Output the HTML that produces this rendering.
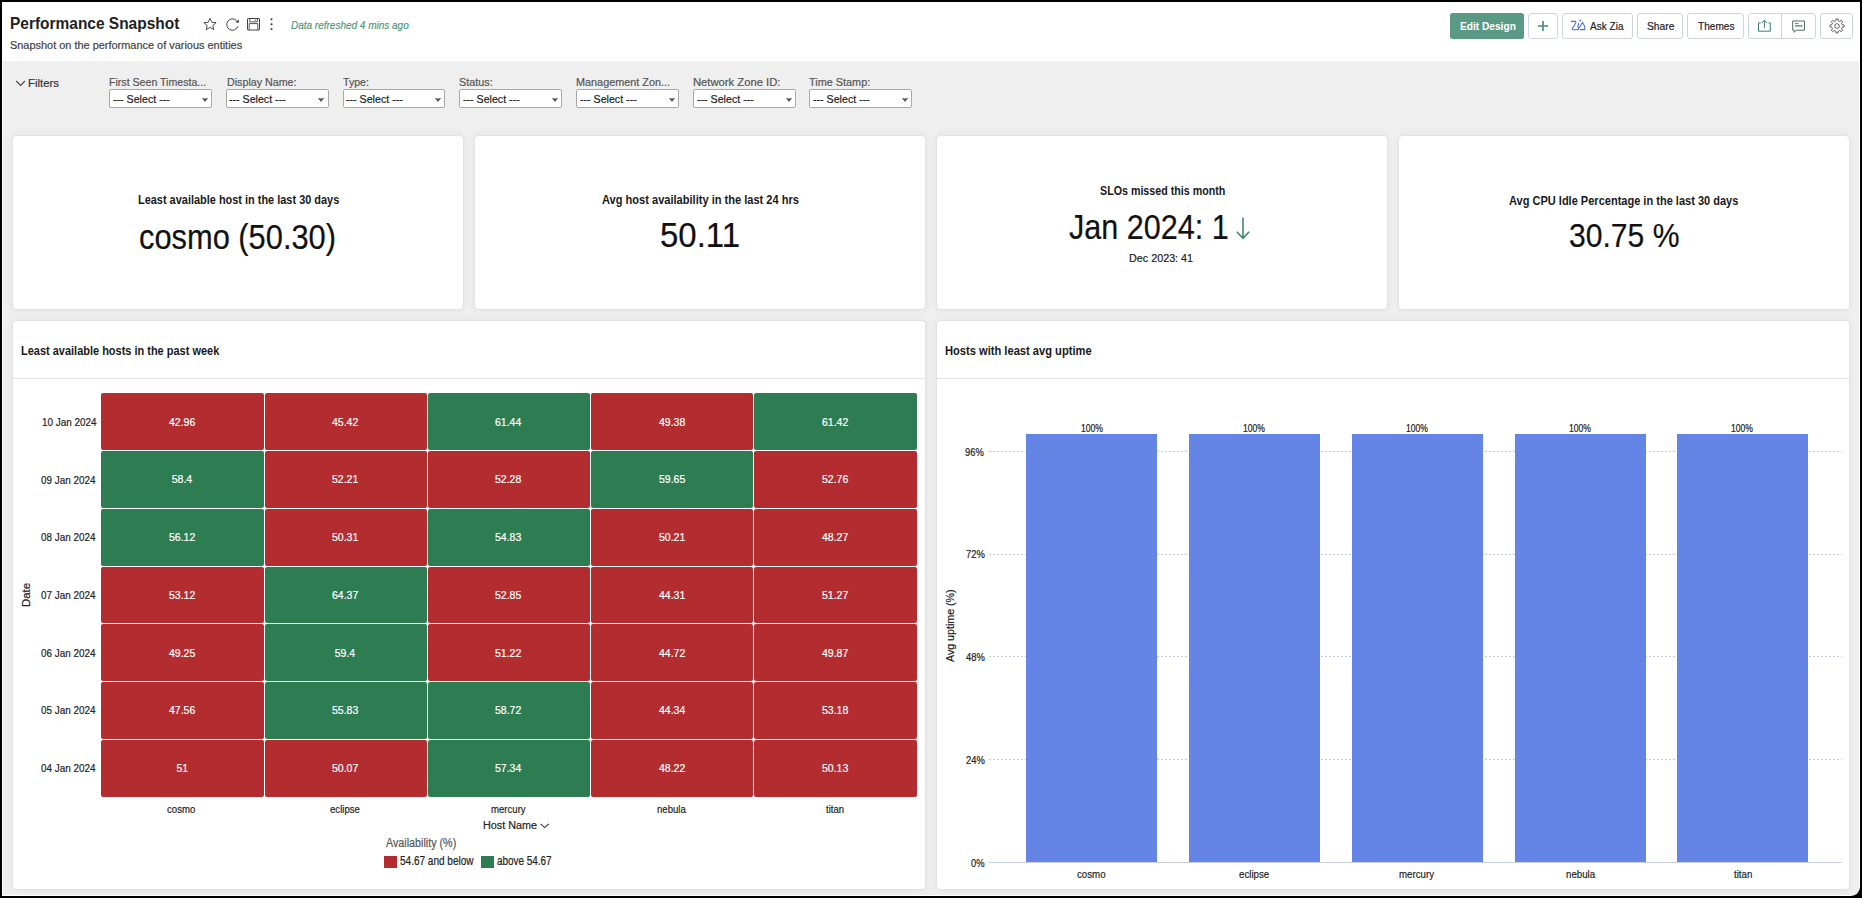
<!DOCTYPE html><html><head><meta charset="utf-8"><style>
*{box-sizing:border-box}
html,body{margin:0;padding:0;width:1862px;height:898px;overflow:hidden;background:#000;font-family:"Liberation Sans",sans-serif}
#app{position:absolute;left:2px;top:2px;width:1858px;height:894px;background:#fff;overflow:hidden;border-bottom-right-radius:9px}
.t{position:absolute;white-space:nowrap;line-height:1;transform-origin:0 0;-webkit-text-stroke:0.2px currentColor}
.t[style*="font-weight:700"]{-webkit-text-stroke:0}
.cv{-webkit-text-stroke:0.2px #fff}
.abs{position:absolute}
.gray{position:absolute;left:1px;top:59px;width:1856px;height:834px;background:#efefef;border-bottom-right-radius:8px}
.card{position:absolute;background:#fff;border-radius:4px;box-shadow:0 0 0 1px #e3e3e3,0 0 7px 2px rgba(0,0,0,0.045)}
.btn{position:absolute;top:13px;height:26px;border:1px solid #cfd5de;border-radius:3px;background:#fff}
.sel{position:absolute;top:89px;height:19px;width:102.5px;background:#fff;border:1px solid #a9a9a9;border-radius:2px}
.cell{position:absolute;border-radius:2px}
.grid{position:absolute;left:989px;width:853px;height:0;border-top:1px dashed #cfcfcf}
.bar{position:absolute;background:#6585e6}
</style></head><body>
<div id="app"><div class="abs" style="left:-2px;top:-2px;width:1862px;height:898px">
<div class="abs" style="left:3px;top:61px;width:1856px;height:834px;background:#efefef;border-bottom-right-radius:8px"></div>
<svg class="abs" style="left:200px;top:14px" width="80" height="20" viewBox="0 0 80 20">
<path d="M10 4.3 L11.8 8.3 L16.1 8.7 L12.8 11.5 L13.8 15.7 L10 13.4 L6.2 15.7 L7.2 11.5 L3.9 8.7 L8.2 8.3 Z" fill="none" stroke="#444" stroke-width="0.95" stroke-linejoin="round"/>
<path d="M36.6 6.6 A5.7 5.7 0 1 0 37.9 12.3" fill="none" stroke="#444" stroke-width="1"/>
<path d="M38.9 5.4 L38.7 9.1 L35.2 8.3 Z" fill="#444"/>
<rect x="47.5" y="4.5" width="12" height="11.5" rx="0.6" fill="none" stroke="#444" stroke-width="1"/>
<path d="M49.8 4.5 V7.9 H57.3 V4.5" fill="none" stroke="#444" stroke-width="0.9"/>
<path d="M55.2 5.6 V6.9" stroke="#444" stroke-width="1"/>
<path d="M49.2 9.6 H57.8 V16 M49.2 9.6 V16" fill="none" stroke="#444" stroke-width="0.9"/>
<circle cx="71.5" cy="5.3" r="1.05" fill="#3a3a3a"/><circle cx="71.5" cy="10.2" r="1.05" fill="#3a3a3a"/><circle cx="71.5" cy="15" r="1.05" fill="#3a3a3a"/>
</svg>
<div class="abs" style="left:1450px;top:13px;width:74px;height:26px;background:#5a9a85;border-radius:2.5px"></div>
<div class="btn" style="left:1528px;width:30px"></div>
<svg class="abs" style="left:1537px;top:20px" width="12" height="12" viewBox="0 0 12 12"><path d="M6 1 V11 M1 6 H11" stroke="#4a8f76" stroke-width="1.7"/></svg>
<div class="btn" style="left:1562px;width:71px"></div>
<svg class="abs" style="left:1568px;top:16px" width="22" height="18" viewBox="0 0 22 18">
<path d="M3.6 5.4 H7.6 Q8.3 6 7.6 7.3 L4.5 12.3 Q3.9 13.7 5.8 13.7 H10 L14.5 6.3 L16.6 10.2 Q16.9 11 16.8 13.6 H12.3" fill="none" stroke="#4b6fd9" stroke-width="1.1" stroke-linejoin="round" stroke-linecap="round"/>
<path d="M10.6 7.5 Q9.3 10 10.3 12.6" fill="none" stroke="#4b6fd9" stroke-width="1.1" stroke-linecap="round"/>
<circle cx="12.2" cy="4.6" r="0.95" fill="#4b6fd9"/>
</svg>
<div class="btn" style="left:1637px;width:46px"></div>
<div class="btn" style="left:1687px;width:57px"></div>
<div class="btn" style="left:1748px;width:68px"></div>
<div class="abs" style="left:1781px;top:13px;width:1px;height:26px;background:#cfd5de"></div>
<div class="btn" style="left:1820px;width:33px"></div>
<svg class="abs" style="left:1756px;top:18px" width="16" height="16" viewBox="0 0 16 16">
<path d="M4.6 4.9 H2.5 V13.2 H14.3 V4.9 H12.4" fill="none" stroke="#3f7d69" stroke-width="1"/>
<path d="M8.4 10.2 V2.4 M5.6 5.1 L8.4 2.2 L11.2 5.1" fill="none" stroke="#3f7d69" stroke-width="1"/>
</svg>
<svg class="abs" style="left:1790px;top:19px" width="17" height="15" viewBox="0 0 17 15">
<path d="M2.7 2 H14.5 V11.2 H6.4 L4.2 13.4 V11.2 H2.7 Z" fill="none" stroke="#4f6d62" stroke-width="1" stroke-linejoin="round"/>
<path d="M5 4.6 H8.6" stroke="#4d8a72" stroke-width="1"/>
<path d="M5 6.9 H12.6" stroke="#8a9a94" stroke-width="1.6"/>
</svg>
<svg class="abs" style="left:1828.5px;top:17.8px" width="16" height="16" viewBox="0 0 16 16"><path d="M6.72 2.86 L7.07 0.96 L8.93 0.96 L9.28 2.86 L10.73 3.46 L12.32 2.37 L13.63 3.68 L12.54 5.27 L13.14 6.72 L15.04 7.07 L15.04 8.93 L13.14 9.28 L12.54 10.73 L13.63 12.32 L12.32 13.63 L10.73 12.54 L9.28 13.14 L8.93 15.04 L7.07 15.04 L6.72 13.14 L5.27 12.54 L3.68 13.63 L2.37 12.32 L3.46 10.73 L2.86 9.28 L0.96 8.93 L0.96 7.07 L2.86 6.72 L3.46 5.27 L2.37 3.68 L3.68 2.37 L5.27 3.46 Z" fill="none" stroke="#555" stroke-width="0.95" stroke-linejoin="round"/><path d="M8.00 5.50 L10.17 6.75 L10.17 9.25 L8.00 10.50 L5.83 9.25 L5.83 6.75 Z" fill="none" stroke="#5f6b68" stroke-width="1" stroke-linejoin="round"/></svg>
<svg class="abs" style="left:15px;top:79px" width="12" height="9" viewBox="0 0 12 9"><path d="M1.3 2.0 L5.6 6.5 L9.9 2.0" fill="none" stroke="#444" stroke-width="1.1"/></svg>
<div class="sel" style="left:109.4px"></div>
<svg class="abs" style="left:200.6px;top:97px" width="8" height="6" viewBox="0 0 8 6"><path d="M0.8 1 Q4 1.8 7.2 1 L4 5 Z" fill="#555"/></svg>
<div class="sel" style="left:226.2px"></div>
<svg class="abs" style="left:317.4px;top:97px" width="8" height="6" viewBox="0 0 8 6"><path d="M0.8 1 Q4 1.8 7.2 1 L4 5 Z" fill="#555"/></svg>
<div class="sel" style="left:342.5px"></div>
<svg class="abs" style="left:433.7px;top:97px" width="8" height="6" viewBox="0 0 8 6"><path d="M0.8 1 Q4 1.8 7.2 1 L4 5 Z" fill="#555"/></svg>
<div class="sel" style="left:459.3px"></div>
<svg class="abs" style="left:550.5px;top:97px" width="8" height="6" viewBox="0 0 8 6"><path d="M0.8 1 Q4 1.8 7.2 1 L4 5 Z" fill="#555"/></svg>
<div class="sel" style="left:576.3px"></div>
<svg class="abs" style="left:667.5px;top:97px" width="8" height="6" viewBox="0 0 8 6"><path d="M0.8 1 Q4 1.8 7.2 1 L4 5 Z" fill="#555"/></svg>
<div class="sel" style="left:693.4px"></div>
<svg class="abs" style="left:784.6px;top:97px" width="8" height="6" viewBox="0 0 8 6"><path d="M0.8 1 Q4 1.8 7.2 1 L4 5 Z" fill="#555"/></svg>
<div class="sel" style="left:809.4px"></div>
<svg class="abs" style="left:900.6px;top:97px" width="8" height="6" viewBox="0 0 8 6"><path d="M0.8 1 Q4 1.8 7.2 1 L4 5 Z" fill="#555"/></svg>
<div class="card" style="left:13px;top:136px;width:450px;height:173px"></div>
<div class="card" style="left:475px;top:136px;width:450px;height:173px"></div>
<div class="card" style="left:937px;top:136px;width:450px;height:173px"></div>
<div class="card" style="left:1399px;top:136px;width:450px;height:173px"></div>
<div class="card" style="left:13px;top:321px;width:912px;height:568px"></div>
<div class="card" style="left:937px;top:321px;width:912px;height:568px"></div>
<div class="abs" style="left:13px;top:378px;width:912px;height:1px;background:#e3e3e3"></div>
<div class="abs" style="left:937px;top:378px;width:912px;height:1px;background:#e3e3e3"></div>
<svg class="abs" style="left:1234px;top:216px" width="18" height="24" viewBox="0 0 18 24"><path d="M9 1.5 V22 M2.8 15.8 L9 22.4 L15.2 15.8" fill="none" stroke="#3d8a68" stroke-width="1.6"/></svg>
<div class="cell" style="left:101.00px;top:393.00px;width:162.70px;height:57.21px;background:#b22c30"></div>
<div class="abs" style="left:101.00px;top:393.00px;width:162.20px;height:56.71px;display:flex;align-items:center;justify-content:center"><span class="cv" style="font-size:11.30px;color:#fff;font-weight:400;line-height:1;display:inline-block;transform:translateY(0.60px) scaleX(0.9300)">42.96</span></div>
<div class="cell" style="left:264.70px;top:393.00px;width:162.20px;height:57.21px;background:#b22c30"></div>
<div class="abs" style="left:264.20px;top:393.00px;width:162.20px;height:56.71px;display:flex;align-items:center;justify-content:center"><span class="cv" style="font-size:11.30px;color:#fff;font-weight:400;line-height:1;display:inline-block;transform:translateY(0.60px) scaleX(0.9300)">45.42</span></div>
<div class="cell" style="left:427.90px;top:393.00px;width:162.20px;height:57.21px;background:#2e7d52"></div>
<div class="abs" style="left:427.40px;top:393.00px;width:162.20px;height:56.71px;display:flex;align-items:center;justify-content:center"><span class="cv" style="font-size:11.30px;color:#fff;font-weight:400;line-height:1;display:inline-block;transform:translateY(0.60px) scaleX(0.9300)">61.44</span></div>
<div class="cell" style="left:591.10px;top:393.00px;width:162.20px;height:57.21px;background:#b22c30"></div>
<div class="abs" style="left:590.60px;top:393.00px;width:162.20px;height:56.71px;display:flex;align-items:center;justify-content:center"><span class="cv" style="font-size:11.30px;color:#fff;font-weight:400;line-height:1;display:inline-block;transform:translateY(0.60px) scaleX(0.9300)">49.38</span></div>
<div class="cell" style="left:754.30px;top:393.00px;width:162.70px;height:57.21px;background:#2e7d52"></div>
<div class="abs" style="left:753.80px;top:393.00px;width:162.20px;height:56.71px;display:flex;align-items:center;justify-content:center"><span class="cv" style="font-size:11.30px;color:#fff;font-weight:400;line-height:1;display:inline-block;transform:translateY(0.60px) scaleX(0.9300)">61.42</span></div>
<div class="cell" style="left:101.00px;top:451.21px;width:162.70px;height:56.71px;background:#2e7d52"></div>
<div class="abs" style="left:101.00px;top:450.71px;width:162.20px;height:56.71px;display:flex;align-items:center;justify-content:center"><span class="cv" style="font-size:11.30px;color:#fff;font-weight:400;line-height:1;display:inline-block;transform:translateY(0.60px) scaleX(0.9300)">58.4</span></div>
<div class="cell" style="left:264.70px;top:451.21px;width:162.20px;height:56.71px;background:#b22c30"></div>
<div class="abs" style="left:264.20px;top:450.71px;width:162.20px;height:56.71px;display:flex;align-items:center;justify-content:center"><span class="cv" style="font-size:11.30px;color:#fff;font-weight:400;line-height:1;display:inline-block;transform:translateY(0.60px) scaleX(0.9300)">52.21</span></div>
<div class="cell" style="left:427.90px;top:451.21px;width:162.20px;height:56.71px;background:#b22c30"></div>
<div class="abs" style="left:427.40px;top:450.71px;width:162.20px;height:56.71px;display:flex;align-items:center;justify-content:center"><span class="cv" style="font-size:11.30px;color:#fff;font-weight:400;line-height:1;display:inline-block;transform:translateY(0.60px) scaleX(0.9300)">52.28</span></div>
<div class="cell" style="left:591.10px;top:451.21px;width:162.20px;height:56.71px;background:#2e7d52"></div>
<div class="abs" style="left:590.60px;top:450.71px;width:162.20px;height:56.71px;display:flex;align-items:center;justify-content:center"><span class="cv" style="font-size:11.30px;color:#fff;font-weight:400;line-height:1;display:inline-block;transform:translateY(0.60px) scaleX(0.9300)">59.65</span></div>
<div class="cell" style="left:754.30px;top:451.21px;width:162.70px;height:56.71px;background:#b22c30"></div>
<div class="abs" style="left:753.80px;top:450.71px;width:162.20px;height:56.71px;display:flex;align-items:center;justify-content:center"><span class="cv" style="font-size:11.30px;color:#fff;font-weight:400;line-height:1;display:inline-block;transform:translateY(0.60px) scaleX(0.9300)">52.76</span></div>
<div class="cell" style="left:101.00px;top:508.93px;width:162.70px;height:56.71px;background:#2e7d52"></div>
<div class="abs" style="left:101.00px;top:508.43px;width:162.20px;height:56.71px;display:flex;align-items:center;justify-content:center"><span class="cv" style="font-size:11.30px;color:#fff;font-weight:400;line-height:1;display:inline-block;transform:translateY(0.60px) scaleX(0.9300)">56.12</span></div>
<div class="cell" style="left:264.70px;top:508.93px;width:162.20px;height:56.71px;background:#b22c30"></div>
<div class="abs" style="left:264.20px;top:508.43px;width:162.20px;height:56.71px;display:flex;align-items:center;justify-content:center"><span class="cv" style="font-size:11.30px;color:#fff;font-weight:400;line-height:1;display:inline-block;transform:translateY(0.60px) scaleX(0.9300)">50.31</span></div>
<div class="cell" style="left:427.90px;top:508.93px;width:162.20px;height:56.71px;background:#2e7d52"></div>
<div class="abs" style="left:427.40px;top:508.43px;width:162.20px;height:56.71px;display:flex;align-items:center;justify-content:center"><span class="cv" style="font-size:11.30px;color:#fff;font-weight:400;line-height:1;display:inline-block;transform:translateY(0.60px) scaleX(0.9300)">54.83</span></div>
<div class="cell" style="left:591.10px;top:508.93px;width:162.20px;height:56.71px;background:#b22c30"></div>
<div class="abs" style="left:590.60px;top:508.43px;width:162.20px;height:56.71px;display:flex;align-items:center;justify-content:center"><span class="cv" style="font-size:11.30px;color:#fff;font-weight:400;line-height:1;display:inline-block;transform:translateY(0.60px) scaleX(0.9300)">50.21</span></div>
<div class="cell" style="left:754.30px;top:508.93px;width:162.70px;height:56.71px;background:#b22c30"></div>
<div class="abs" style="left:753.80px;top:508.43px;width:162.20px;height:56.71px;display:flex;align-items:center;justify-content:center"><span class="cv" style="font-size:11.30px;color:#fff;font-weight:400;line-height:1;display:inline-block;transform:translateY(0.60px) scaleX(0.9300)">48.27</span></div>
<div class="cell" style="left:101.00px;top:566.64px;width:162.70px;height:56.71px;background:#b22c30"></div>
<div class="abs" style="left:101.00px;top:566.14px;width:162.20px;height:56.71px;display:flex;align-items:center;justify-content:center"><span class="cv" style="font-size:11.30px;color:#fff;font-weight:400;line-height:1;display:inline-block;transform:translateY(0.60px) scaleX(0.9300)">53.12</span></div>
<div class="cell" style="left:264.70px;top:566.64px;width:162.20px;height:56.71px;background:#2e7d52"></div>
<div class="abs" style="left:264.20px;top:566.14px;width:162.20px;height:56.71px;display:flex;align-items:center;justify-content:center"><span class="cv" style="font-size:11.30px;color:#fff;font-weight:400;line-height:1;display:inline-block;transform:translateY(0.60px) scaleX(0.9300)">64.37</span></div>
<div class="cell" style="left:427.90px;top:566.64px;width:162.20px;height:56.71px;background:#b22c30"></div>
<div class="abs" style="left:427.40px;top:566.14px;width:162.20px;height:56.71px;display:flex;align-items:center;justify-content:center"><span class="cv" style="font-size:11.30px;color:#fff;font-weight:400;line-height:1;display:inline-block;transform:translateY(0.60px) scaleX(0.9300)">52.85</span></div>
<div class="cell" style="left:591.10px;top:566.64px;width:162.20px;height:56.71px;background:#b22c30"></div>
<div class="abs" style="left:590.60px;top:566.14px;width:162.20px;height:56.71px;display:flex;align-items:center;justify-content:center"><span class="cv" style="font-size:11.30px;color:#fff;font-weight:400;line-height:1;display:inline-block;transform:translateY(0.60px) scaleX(0.9300)">44.31</span></div>
<div class="cell" style="left:754.30px;top:566.64px;width:162.70px;height:56.71px;background:#b22c30"></div>
<div class="abs" style="left:753.80px;top:566.14px;width:162.20px;height:56.71px;display:flex;align-items:center;justify-content:center"><span class="cv" style="font-size:11.30px;color:#fff;font-weight:400;line-height:1;display:inline-block;transform:translateY(0.60px) scaleX(0.9300)">51.27</span></div>
<div class="cell" style="left:101.00px;top:624.36px;width:162.70px;height:56.71px;background:#b22c30"></div>
<div class="abs" style="left:101.00px;top:623.86px;width:162.20px;height:56.71px;display:flex;align-items:center;justify-content:center"><span class="cv" style="font-size:11.30px;color:#fff;font-weight:400;line-height:1;display:inline-block;transform:translateY(0.60px) scaleX(0.9300)">49.25</span></div>
<div class="cell" style="left:264.70px;top:624.36px;width:162.20px;height:56.71px;background:#2e7d52"></div>
<div class="abs" style="left:264.20px;top:623.86px;width:162.20px;height:56.71px;display:flex;align-items:center;justify-content:center"><span class="cv" style="font-size:11.30px;color:#fff;font-weight:400;line-height:1;display:inline-block;transform:translateY(0.60px) scaleX(0.9300)">59.4</span></div>
<div class="cell" style="left:427.90px;top:624.36px;width:162.20px;height:56.71px;background:#b22c30"></div>
<div class="abs" style="left:427.40px;top:623.86px;width:162.20px;height:56.71px;display:flex;align-items:center;justify-content:center"><span class="cv" style="font-size:11.30px;color:#fff;font-weight:400;line-height:1;display:inline-block;transform:translateY(0.60px) scaleX(0.9300)">51.22</span></div>
<div class="cell" style="left:591.10px;top:624.36px;width:162.20px;height:56.71px;background:#b22c30"></div>
<div class="abs" style="left:590.60px;top:623.86px;width:162.20px;height:56.71px;display:flex;align-items:center;justify-content:center"><span class="cv" style="font-size:11.30px;color:#fff;font-weight:400;line-height:1;display:inline-block;transform:translateY(0.60px) scaleX(0.9300)">44.72</span></div>
<div class="cell" style="left:754.30px;top:624.36px;width:162.70px;height:56.71px;background:#b22c30"></div>
<div class="abs" style="left:753.80px;top:623.86px;width:162.20px;height:56.71px;display:flex;align-items:center;justify-content:center"><span class="cv" style="font-size:11.30px;color:#fff;font-weight:400;line-height:1;display:inline-block;transform:translateY(0.60px) scaleX(0.9300)">49.87</span></div>
<div class="cell" style="left:101.00px;top:682.07px;width:162.70px;height:56.71px;background:#b22c30"></div>
<div class="abs" style="left:101.00px;top:681.57px;width:162.20px;height:56.71px;display:flex;align-items:center;justify-content:center"><span class="cv" style="font-size:11.30px;color:#fff;font-weight:400;line-height:1;display:inline-block;transform:translateY(0.60px) scaleX(0.9300)">47.56</span></div>
<div class="cell" style="left:264.70px;top:682.07px;width:162.20px;height:56.71px;background:#2e7d52"></div>
<div class="abs" style="left:264.20px;top:681.57px;width:162.20px;height:56.71px;display:flex;align-items:center;justify-content:center"><span class="cv" style="font-size:11.30px;color:#fff;font-weight:400;line-height:1;display:inline-block;transform:translateY(0.60px) scaleX(0.9300)">55.83</span></div>
<div class="cell" style="left:427.90px;top:682.07px;width:162.20px;height:56.71px;background:#2e7d52"></div>
<div class="abs" style="left:427.40px;top:681.57px;width:162.20px;height:56.71px;display:flex;align-items:center;justify-content:center"><span class="cv" style="font-size:11.30px;color:#fff;font-weight:400;line-height:1;display:inline-block;transform:translateY(0.60px) scaleX(0.9300)">58.72</span></div>
<div class="cell" style="left:591.10px;top:682.07px;width:162.20px;height:56.71px;background:#b22c30"></div>
<div class="abs" style="left:590.60px;top:681.57px;width:162.20px;height:56.71px;display:flex;align-items:center;justify-content:center"><span class="cv" style="font-size:11.30px;color:#fff;font-weight:400;line-height:1;display:inline-block;transform:translateY(0.60px) scaleX(0.9300)">44.34</span></div>
<div class="cell" style="left:754.30px;top:682.07px;width:162.70px;height:56.71px;background:#b22c30"></div>
<div class="abs" style="left:753.80px;top:681.57px;width:162.20px;height:56.71px;display:flex;align-items:center;justify-content:center"><span class="cv" style="font-size:11.30px;color:#fff;font-weight:400;line-height:1;display:inline-block;transform:translateY(0.60px) scaleX(0.9300)">53.18</span></div>
<div class="cell" style="left:101.00px;top:739.79px;width:162.70px;height:57.21px;background:#b22c30"></div>
<div class="abs" style="left:101.00px;top:739.29px;width:162.20px;height:56.71px;display:flex;align-items:center;justify-content:center"><span class="cv" style="font-size:11.30px;color:#fff;font-weight:400;line-height:1;display:inline-block;transform:translateY(0.60px) scaleX(0.9300)">51</span></div>
<div class="cell" style="left:264.70px;top:739.79px;width:162.20px;height:57.21px;background:#b22c30"></div>
<div class="abs" style="left:264.20px;top:739.29px;width:162.20px;height:56.71px;display:flex;align-items:center;justify-content:center"><span class="cv" style="font-size:11.30px;color:#fff;font-weight:400;line-height:1;display:inline-block;transform:translateY(0.60px) scaleX(0.9300)">50.07</span></div>
<div class="cell" style="left:427.90px;top:739.79px;width:162.20px;height:57.21px;background:#2e7d52"></div>
<div class="abs" style="left:427.40px;top:739.29px;width:162.20px;height:56.71px;display:flex;align-items:center;justify-content:center"><span class="cv" style="font-size:11.30px;color:#fff;font-weight:400;line-height:1;display:inline-block;transform:translateY(0.60px) scaleX(0.9300)">57.34</span></div>
<div class="cell" style="left:591.10px;top:739.79px;width:162.20px;height:57.21px;background:#b22c30"></div>
<div class="abs" style="left:590.60px;top:739.29px;width:162.20px;height:56.71px;display:flex;align-items:center;justify-content:center"><span class="cv" style="font-size:11.30px;color:#fff;font-weight:400;line-height:1;display:inline-block;transform:translateY(0.60px) scaleX(0.9300)">48.22</span></div>
<div class="cell" style="left:754.30px;top:739.79px;width:162.70px;height:57.21px;background:#b22c30"></div>
<div class="abs" style="left:753.80px;top:739.29px;width:162.20px;height:56.71px;display:flex;align-items:center;justify-content:center"><span class="cv" style="font-size:11.30px;color:#fff;font-weight:400;line-height:1;display:inline-block;transform:translateY(0.60px) scaleX(0.9300)">50.13</span></div>
<svg class="abs" style="left:539px;top:821px" width="12" height="8" viewBox="0 0 12 8"><path d="M1.6 2.9 L5.7 6.6 L9.8 2.9" fill="none" stroke="#333" stroke-width="1.05"/></svg>
<div class="abs" style="left:384px;top:856px;width:13px;height:12px;background:#b22c30"></div>
<div class="abs" style="left:481px;top:856px;width:13px;height:12px;background:#2e7d52"></div>
<div class="t" id="r_date" style="left:20.30px;top:607.30px;font-size:11.60px;color:#222;transform:rotate(-90deg) scaleX(0.978)">Date</div>
<svg class="abs" style="left:989px;top:400px" width="854" height="470" viewBox="989 400 854 470">
<line x1="989" x2="1842" y1="759.5" y2="759.5" stroke="#c6cbd3" stroke-width="1" stroke-dasharray="2 2"/>
<line x1="989" x2="1842" y1="656.5" y2="656.5" stroke="#c6cbd3" stroke-width="1" stroke-dasharray="2 2"/>
<line x1="989" x2="1842" y1="554.5" y2="554.5" stroke="#c6cbd3" stroke-width="1" stroke-dasharray="2 2"/>
<line x1="989" x2="1842" y1="451.5" y2="451.5" stroke="#c6cbd3" stroke-width="1" stroke-dasharray="2 2"/>
</svg>
<div class="bar" style="left:1026px;top:434px;width:131px;height:428px"></div>
<div class="bar" style="left:1189px;top:434px;width:131px;height:428px"></div>
<div class="bar" style="left:1352px;top:434px;width:131px;height:428px"></div>
<div class="bar" style="left:1515px;top:434px;width:131px;height:428px"></div>
<div class="bar" style="left:1677px;top:434px;width:131px;height:428px"></div>
<div class="abs" style="left:989px;top:862px;width:853px;height:1px;background:#c9d1dc"></div>
<div class="t" id="r_ya" style="left:945.00px;top:662.40px;font-size:11.30px;color:#222;transform:rotate(-90deg) scaleX(0.943)">Avg uptime (%)</div>
<div class="t" id="t_title" style="left:10.38px;top:14.81px;font-size:17.30px;font-weight:700;font-style:normal;color:#222;transform:scaleX(0.8948)">Performance Snapshot</div>
<div class="t" id="t_sub" style="left:9.54px;top:39.62px;font-size:10.61px;font-weight:400;font-style:normal;color:#444;transform:scaleX(1.0303)">Snapshot on the performance of various entities</div>
<div class="t" id="t_refr" style="left:290.69px;top:20.32px;font-size:10.90px;font-weight:400;font-style:italic;color:#4f9a80;transform:scaleX(0.9171)">Data refreshed 4 mins ago</div>
<div class="t" id="t_edit" style="left:1459.77px;top:19.88px;font-size:11.77px;font-weight:700;font-style:normal;color:#fff;transform:scaleX(0.8629)">Edit Design</div>
<div class="t" id="t_zia" style="left:1589.63px;top:19.66px;font-size:11.63px;font-weight:400;font-style:normal;color:#222;transform:scaleX(0.8641)">Ask Zia</div>
<div class="t" id="t_share" style="left:1646.62px;top:19.66px;font-size:11.63px;font-weight:400;font-style:normal;color:#222;transform:scaleX(0.8849)">Share</div>
<div class="t" id="t_themes" style="left:1697.86px;top:19.66px;font-size:11.63px;font-weight:400;font-style:normal;color:#222;transform:scaleX(0.8703)">Themes</div>
<div class="t" id="t_filters" style="left:28.38px;top:76.91px;font-size:11.63px;font-weight:400;font-style:normal;color:#333;transform:scaleX(0.9765)">Filters</div>
<div class="t" id="t_lab0" style="left:109.46px;top:76.53px;font-size:11.19px;font-weight:400;font-style:normal;color:#555;transform:scaleX(0.9472)">First Seen Timesta...</div>
<div class="t" id="t_sel0" style="left:113.00px;top:93.50px;font-size:11.34px;font-weight:400;font-style:normal;color:#222;transform:scaleX(0.9395)">--- Select ---</div>
<div class="t" id="t_lab1" style="left:226.54px;top:76.53px;font-size:11.19px;font-weight:400;font-style:normal;color:#555;transform:scaleX(0.9559)">Display Name:</div>
<div class="t" id="t_sel1" style="left:229.38px;top:93.50px;font-size:11.34px;font-weight:400;font-style:normal;color:#222;transform:scaleX(0.9387)">--- Select ---</div>
<div class="t" id="t_lab2" style="left:342.77px;top:76.53px;font-size:11.19px;font-weight:400;font-style:normal;color:#555;transform:scaleX(0.9466)">Type:</div>
<div class="t" id="t_sel2" style="left:346.31px;top:93.50px;font-size:11.34px;font-weight:400;font-style:normal;color:#222;transform:scaleX(0.9395)">--- Select ---</div>
<div class="t" id="t_lab3" style="left:459.15px;top:76.53px;font-size:11.19px;font-weight:400;font-style:normal;color:#555;transform:scaleX(0.9706)">Status:</div>
<div class="t" id="t_sel3" style="left:462.69px;top:93.50px;font-size:11.34px;font-weight:400;font-style:normal;color:#222;transform:scaleX(0.9387)">--- Select ---</div>
<div class="t" id="t_lab4" style="left:576.15px;top:76.53px;font-size:11.19px;font-weight:400;font-style:normal;color:#555;transform:scaleX(0.9699)">Management Zon...</div>
<div class="t" id="t_sel4" style="left:579.69px;top:93.50px;font-size:11.34px;font-weight:400;font-style:normal;color:#222;transform:scaleX(0.9387)">--- Select ---</div>
<div class="t" id="t_lab5" style="left:693.46px;top:76.53px;font-size:11.19px;font-weight:400;font-style:normal;color:#555;transform:scaleX(1.0048)">Network Zone ID:</div>
<div class="t" id="t_sel5" style="left:697.00px;top:93.50px;font-size:11.34px;font-weight:400;font-style:normal;color:#222;transform:scaleX(0.9395)">--- Select ---</div>
<div class="t" id="t_lab6" style="left:809.46px;top:76.53px;font-size:11.19px;font-weight:400;font-style:normal;color:#555;transform:scaleX(0.9719)">Time Stamp:</div>
<div class="t" id="t_sel6" style="left:813.00px;top:93.50px;font-size:11.34px;font-weight:400;font-style:normal;color:#222;transform:scaleX(0.9395)">--- Select ---</div>
<div class="t" id="t_k1" style="left:137.77px;top:194.39px;font-size:12.06px;font-weight:700;font-style:normal;color:#1a1a1a;transform:scaleX(0.9082)">Least available host in the last 30 days</div>
<div class="t" id="t_k1v" style="left:139.00px;top:220.46px;font-size:34.30px;font-weight:400;font-style:normal;color:#111;transform:scaleX(0.8986)">cosmo (50.30)</div>
<div class="t" id="t_k2" style="left:601.62px;top:194.34px;font-size:12.35px;font-weight:700;font-style:normal;color:#1a1a1a;transform:scaleX(0.8964)">Avg host availability in the last 24 hrs</div>
<div class="t" id="t_k2v" style="left:659.69px;top:218.36px;font-size:34.30px;font-weight:400;font-style:normal;color:#111;transform:scaleX(0.9608)">50.11</div>
<div class="t" id="t_k3" style="left:1099.62px;top:185.36px;font-size:12.21px;font-weight:700;font-style:normal;color:#1a1a1a;transform:scaleX(0.8756)">SLOs missed this month</div>
<div class="t" id="t_k3v" style="left:1069.15px;top:209.54px;font-size:34.74px;font-weight:400;font-style:normal;color:#111;transform:scaleX(0.8795)">Jan 2024: 1</div>
<div class="t" id="t_k3s" style="left:1129.38px;top:252.53px;font-size:11.19px;font-weight:400;font-style:normal;color:#222;transform:scaleX(0.9630)">Dec 2023: 41</div>
<div class="t" id="t_k4" style="left:1509.31px;top:194.64px;font-size:12.06px;font-weight:700;font-style:normal;color:#1a1a1a;transform:scaleX(0.9151)">Avg CPU Idle Percentage in the last 30 days</div>
<div class="t" id="t_k4v" style="left:1569.01px;top:218.93px;font-size:33.58px;font-weight:400;font-style:normal;color:#111;transform:scaleX(0.8960)">30.75 %</div>
<div class="t" id="t_c1" style="left:20.69px;top:344.55px;font-size:12.65px;font-weight:700;font-style:normal;color:#1a1a1a;transform:scaleX(0.8682)">Least available hosts in the past week</div>
<div class="t" id="t_c2" style="left:945.23px;top:344.57px;font-size:12.50px;font-weight:700;font-style:normal;color:#1a1a1a;transform:scaleX(0.8904)">Hosts with least avg uptime</div>
<div class="t" id="t_d0" style="left:41.69px;top:415.85px;font-size:11.77px;font-weight:400;font-style:normal;color:#222;transform:scaleX(0.8417)">10 Jan 2024</div>
<div class="t" id="t_d1" style="left:41.40px;top:473.57px;font-size:11.77px;font-weight:400;font-style:normal;color:#222;transform:scaleX(0.8417)">09 Jan 2024</div>
<div class="t" id="t_d2" style="left:41.40px;top:531.28px;font-size:11.77px;font-weight:400;font-style:normal;color:#222;transform:scaleX(0.8417)">08 Jan 2024</div>
<div class="t" id="t_d3" style="left:41.40px;top:589.00px;font-size:11.77px;font-weight:400;font-style:normal;color:#222;transform:scaleX(0.8417)">07 Jan 2024</div>
<div class="t" id="t_d4" style="left:41.40px;top:646.71px;font-size:11.77px;font-weight:400;font-style:normal;color:#222;transform:scaleX(0.8417)">06 Jan 2024</div>
<div class="t" id="t_d5" style="left:41.40px;top:704.43px;font-size:11.77px;font-weight:400;font-style:normal;color:#222;transform:scaleX(0.8417)">05 Jan 2024</div>
<div class="t" id="t_d6" style="left:41.40px;top:762.14px;font-size:11.77px;font-weight:400;font-style:normal;color:#222;transform:scaleX(0.8417)">04 Jan 2024</div>
<div class="t" id="t_h0" style="left:167.48px;top:804.04px;font-size:11.23px;font-weight:400;font-style:normal;color:#222;transform:scaleX(0.8549)">cosmo</div>
<div class="t" id="t_h1" style="left:329.90px;top:804.04px;font-size:11.23px;font-weight:400;font-style:normal;color:#222;transform:scaleX(0.8549)">eclipse</div>
<div class="t" id="t_h2" style="left:490.50px;top:804.04px;font-size:11.23px;font-weight:400;font-style:normal;color:#222;transform:scaleX(0.8549)">mercury</div>
<div class="t" id="t_h3" style="left:657.10px;top:804.04px;font-size:11.23px;font-weight:400;font-style:normal;color:#222;transform:scaleX(0.8549)">nebula</div>
<div class="t" id="t_h4" style="left:826.20px;top:804.04px;font-size:11.23px;font-weight:400;font-style:normal;color:#222;transform:scaleX(0.8549)">titan</div>
<div class="t" id="t_hn" style="left:482.62px;top:819.16px;font-size:11.63px;font-weight:400;font-style:normal;color:#222;transform:scaleX(0.9292)">Host Name</div>
<div class="t" id="t_avail" style="left:385.55px;top:836.80px;font-size:12.65px;font-weight:400;font-style:normal;color:#555;transform:scaleX(0.8499)">Availability (%)</div>
<div class="t" id="t_lg1" style="left:399.69px;top:855.36px;font-size:12.21px;font-weight:400;font-style:normal;color:#222;transform:scaleX(0.8213)">54.67 and below</div>
<div class="t" id="t_lg2" style="left:496.62px;top:855.36px;font-size:12.21px;font-weight:400;font-style:normal;color:#222;transform:scaleX(0.8122)">above 54.67</div>
<div class="t" id="t_b0" style="left:1080.54px;top:423.76px;font-size:10.03px;font-weight:400;font-style:normal;color:#222;transform:scaleX(0.8602)">100%</div>
<div class="t" id="t_bx0" style="left:1076.69px;top:867.76px;font-size:11.74px;font-weight:400;font-style:normal;color:#222;transform:scaleX(0.8271)">cosmo</div>
<div class="t" id="t_b1" style="left:1243.00px;top:423.76px;font-size:10.03px;font-weight:400;font-style:normal;color:#222;transform:scaleX(0.8602)">100%</div>
<div class="t" id="t_bx1" style="left:1239.00px;top:867.76px;font-size:11.74px;font-weight:400;font-style:normal;color:#222;transform:scaleX(0.8271)">eclipse</div>
<div class="t" id="t_b2" style="left:1406.00px;top:423.76px;font-size:10.03px;font-weight:400;font-style:normal;color:#222;transform:scaleX(0.8602)">100%</div>
<div class="t" id="t_bx2" style="left:1398.50px;top:867.76px;font-size:11.74px;font-weight:400;font-style:normal;color:#222;transform:scaleX(0.8271)">mercury</div>
<div class="t" id="t_b3" style="left:1569.00px;top:423.76px;font-size:10.03px;font-weight:400;font-style:normal;color:#222;transform:scaleX(0.8602)">100%</div>
<div class="t" id="t_bx3" style="left:1565.50px;top:867.76px;font-size:11.74px;font-weight:400;font-style:normal;color:#222;transform:scaleX(0.8271)">nebula</div>
<div class="t" id="t_b4" style="left:1731.00px;top:423.76px;font-size:10.03px;font-weight:400;font-style:normal;color:#222;transform:scaleX(0.8602)">100%</div>
<div class="t" id="t_bx4" style="left:1733.50px;top:867.76px;font-size:11.74px;font-weight:400;font-style:normal;color:#222;transform:scaleX(0.8271)">titan</div>
<div class="t" id="t_y0" style="left:971.00px;top:857.55px;font-size:11.05px;font-weight:400;font-style:normal;color:#222;transform:scaleX(0.8484)">0%</div>
<div class="t" id="t_y1" style="left:966.00px;top:754.80px;font-size:11.05px;font-weight:400;font-style:normal;color:#222;transform:scaleX(0.8484)">24%</div>
<div class="t" id="t_y2" style="left:966.00px;top:652.05px;font-size:11.05px;font-weight:400;font-style:normal;color:#222;transform:scaleX(0.8484)">48%</div>
<div class="t" id="t_y3" style="left:966.00px;top:549.30px;font-size:11.05px;font-weight:400;font-style:normal;color:#222;transform:scaleX(0.8484)">72%</div>
<div class="t" id="t_y4" style="left:965.38px;top:446.55px;font-size:11.05px;font-weight:400;font-style:normal;color:#222;transform:scaleX(0.8484)">96%</div>
</div></div></body></html>
